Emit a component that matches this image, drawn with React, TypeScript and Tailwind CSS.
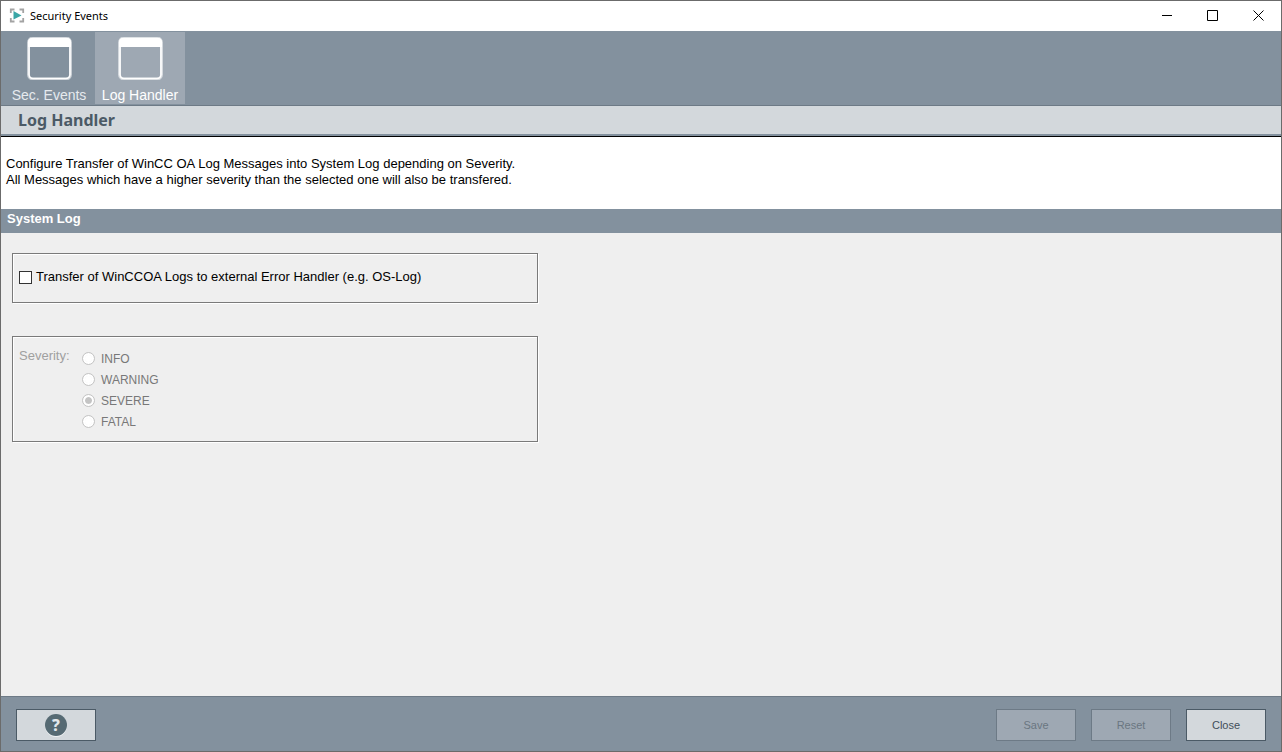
import { useState } from 'react';

const panels = ['Sec. Events', 'Log Handler'];

const severities = ['INFO', 'WARNING', 'SEVERE', 'FATAL'];

function AppIcon() {
  return (
    <svg className="size-4" viewBox="0 0 16 16" fill="none">
      <path
        d="M1.8 5V1.5H5.5M10.5 1.5h3.7V5M14.2 10V13.5H10.5M5.5 13.5H1.8V10"
        stroke="#a3a3a3"
        strokeWidth="1.8"
      />
      <path d="M4.5 3L12.5 7.5L4.5 11.5Z" fill="#3aa6a6" />
    </svg>
  );
}

function PanelIcon() {
  return (
    <svg className="h-[43px] w-[46px]" viewBox="0 0 46 43" fill="none">
      <rect x="2.5" y="1" width="42" height="41" rx="4.5" stroke="#fff" strokeOpacity="0.55" strokeWidth="3" />
      <rect x="3" y="1.5" width="41" height="40" rx="4" stroke="#fff" strokeWidth="1.6" />
      <path d="M2 10V5a4 4 0 0 1 4-4h35a4 4 0 0 1 4 4v5z" fill="#fff" />
    </svg>
  );
}

function HelpIcon() {
  return (
    <span className="flex size-[22px] items-center justify-center rounded-full bg-[#566a73] font-['Noto_Sans',sans-serif] text-base font-extrabold leading-none text-[#e3e8eb] shadow-[0_1px_0_#f1f3f5]">
      ?
    </span>
  );
}

export default function App() {
  const [active, setActive] = useState('Log Handler');
  const [transfer, setTransfer] = useState(false);
  const [severity, setSeverity] = useState('SEVERE');

  return (
    <div className="flex min-h-screen flex-col border border-[#6b6b6b] bg-[#efefef] font-['Liberation_Sans',Arial,sans-serif] text-[13px] leading-4 text-black">
      <header className="flex h-[30px] items-center bg-white pl-2">
        <AppIcon />
        <h1 className="ml-[5px] flex-1 font-['Noto_Sans',sans-serif] text-[11px]">Security Events</h1>
        <button aria-label="Minimize" className="flex h-full w-[46px] items-center justify-center">
          <svg className="size-[11px]" viewBox="0 0 11 11" stroke="#000" fill="none">
            <path d="M1 4.5h10" />
          </svg>
        </button>
        <button aria-label="Maximize" className="flex h-full w-[46px] items-center justify-center">
          <svg className="size-[11px] overflow-visible" viewBox="0 0 11 11" stroke="#000" fill="none">
            <path d="M.5 -.5h10v10h-10z" />
          </svg>
        </button>
        <button aria-label="Close window" className="flex h-full w-[46px] items-center justify-center">
          <svg className="size-[11px] overflow-visible" viewBox="0 0 11 11" stroke="#000" fill="none">
            <path d="M.5 -.5l10 10M10.5 -.5l-10 10" />
          </svg>
        </button>
      </header>

      <nav className="flex h-[75px] gap-px border-b border-[#6d7a86] bg-[#83919e] py-px pl-[3px]">
        {panels.map((name) => (
          <button
            key={name}
            onClick={() => setActive(name)}
            className={`flex w-[90px] flex-col items-center justify-between pt-[5px] text-sm leading-[18px] ${active === name ? 'bg-[#9ea8b3] text-white' : 'text-[#e6eaee]'}`}
          >
            <PanelIcon />
            {name}
          </button>
        ))}
      </nav>

      <div className="border-b border-black">
        <h2 className="h-[30px] border-b-2 border-[#83919e] bg-[#d3d8dc] pl-[17px] font-['Noto_Sans',sans-serif] text-base font-bold leading-7 text-[#4b5a66]">
          {active}
        </h2>
      </div>

      <p className="bg-white px-[5px] pb-[21px] pt-[19px]">
        Configure Transfer of WinCC OA Log Messages into System Log depending on Severity.
        <br />
        All Messages which have a higher severity than the selected one will also be transfered.
      </p>
      <h3 className="h-6 bg-[#83919e] px-1.5 pt-0.5 font-bold text-white">System Log</h3>

      <main className="flex-1 px-[11px] pt-5">
        <section className="flex h-[50px] max-w-[526px] items-start border border-[#7a7a7a] px-1.5 pt-[15px] shadow-[inset_1px_1px_0_#fff,1px_1px_0_#fff]">
          <label className="flex items-center gap-1">
            <input
              type="checkbox"
              checked={transfer}
              onChange={(e) => setTransfer(e.target.checked)}
              className="size-[13px] appearance-none border border-[#333] bg-white checked:bg-[#333]"
            />
            Transfer of WinCCOA Logs to external Error Handler (e.g. OS-Log)
          </label>
        </section>

        <fieldset
          disabled={!transfer}
          className="mt-[33px] flex h-[106px] max-w-[526px] border border-[#7a7a7a] px-1.5 pt-[11px] shadow-[inset_1px_1px_0_#fff,1px_1px_0_#fff]"
        >
          <span id="severity" className="w-[63px] text-[#a0a0a0]">Severity:</span>
          <div role="radiogroup" aria-labelledby="severity" className="text-xs text-[#787878]">
            {severities.map((level) => (
              <label key={level} className="flex h-[21px] items-center gap-1.5">
                <input
                  type="radio"
                  name="severity"
                  checked={severity === level}
                  onChange={() => setSeverity(level)}
                  className="size-[13px] appearance-none rounded-full border border-[#c4c4c4] bg-white bg-clip-content p-0.5 shadow-[inset_0_0_0_2px_#fff] checked:bg-[#c4c4c4]"
                />
                {level}
              </label>
            ))}
          </div>
        </fieldset>
      </main>

      <footer className="flex h-[55px] items-center gap-[15px] border-t border-[#6d7a86] bg-[#83919e] px-[15px] pt-px text-[11px]">
        <button
          aria-label="Help"
          className="mr-auto flex h-8 w-20 items-center justify-center border border-[#4b5a66] bg-[#d3d8dc]"
        >
          <HelpIcon />
        </button>
        <button
          disabled={!transfer}
          className="h-8 w-20 border border-[#4b5a66] bg-[#d3d8dc] text-[#3f4e5a] disabled:border-[#6d7a86] disabled:bg-[#9ea8b3] disabled:text-[#6a7681]"
        >
          Save
        </button>
        <button
          disabled={!transfer}
          className="h-8 w-20 border border-[#4b5a66] bg-[#d3d8dc] text-[#3f4e5a] disabled:border-[#6d7a86] disabled:bg-[#9ea8b3] disabled:text-[#6a7681]"
        >
          Reset
        </button>
        <button className="h-8 w-20 border border-[#4b5a66] bg-[#d3d8dc] text-[#3f4e5a]">Close</button>
      </footer>
    </div>
  );
}
